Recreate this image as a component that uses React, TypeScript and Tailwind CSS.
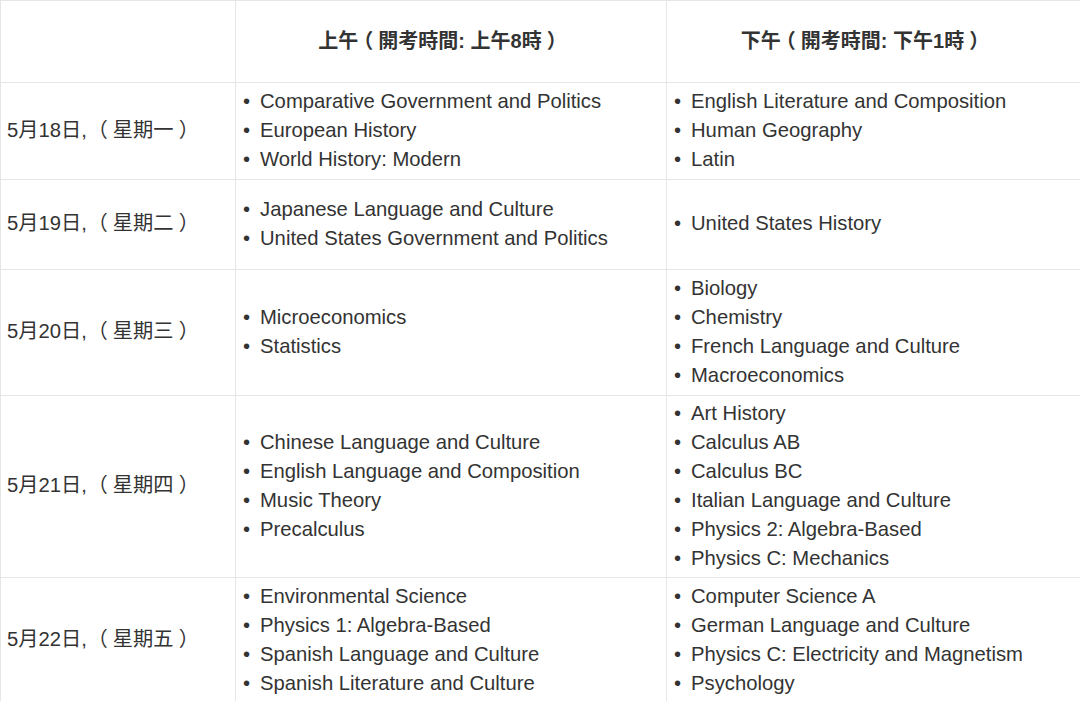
import React from "react";

type Row = { d: string; w: string; am: string[]; pm: string[]; h: string };

const rows: Row[] = [
  {
    d: "18",
    w: "星期一",
    am: ["Comparative Government and Politics", "European History", "World History: Modern"],
    pm: ["English Literature and Composition", "Human Geography", "Latin"],
    h: "h-[97px]",
  },
  {
    d: "19",
    w: "星期二",
    am: ["Japanese Language and Culture", "United States Government and Politics"],
    pm: ["United States History"],
    h: "h-[90px]",
  },
  {
    d: "20",
    w: "星期三",
    am: ["Microeconomics", "Statistics"],
    pm: ["Biology", "Chemistry", "French Language and Culture", "Macroeconomics"],
    h: "h-[126px]",
  },
  {
    d: "21",
    w: "星期四",
    am: ["Chinese Language and Culture", "English Language and Composition", "Music Theory", "Precalculus"],
    pm: [
      "Art History",
      "Calculus AB",
      "Calculus BC",
      "Italian Language and Culture",
      "Physics 2: Algebra-Based",
      "Physics C: Mechanics",
    ],
    h: "h-[182px]",
  },
  {
    d: "22",
    w: "星期五",
    am: [
      "Environmental Science",
      "Physics 1: Algebra-Based",
      "Spanish Language and Culture",
      "Spanish Literature and Culture",
    ],
    pm: [
      "Computer Science A",
      "German Language and Culture",
      "Physics C: Electricity and Magnetism",
      "Psychology",
    ],
    h: "h-[126px]",
  },
];

function Paren({ ch }: { ch: string }) {
  return (
    <span className="inline-block w-[1em] text-center [font-feature-settings:'halt']">{ch}</span>
  );
}

function List({ items }: { items: string[] }) {
  return (
    <ul className="pl-[6px] flex flex-col">
      {items.map((t) => (
        <li key={t} className="flex leading-[29px]">
          <span className="w-[18px] shrink-0 pl-[1px]">•</span>
          <span>{t}</span>
        </li>
      ))}
    </ul>
  );
}

export default function App() {
  return (
    <div
      className="w-[1080px] bg-white text-[#333] text-[20.25px]"
      style={{ fontFamily: '"Liberation Sans", "Noto Sans CJK TC", Arial, sans-serif' }}
    >
      <div className="grid grid-cols-[235px_431px_414px] border-t border-l border-[#e6e6e6]">
        <div className="h-[82px] border-r border-b border-[#e6e6e6]" />
        <div className="h-[82px] border-r border-b border-[#e6e6e6] flex items-center justify-center pr-[22px] pb-[2px] font-bold text-[20px] whitespace-pre">
          上午<Paren ch="（" />開考時間: 上午8時<Paren ch="）" />
        </div>
        <div className="h-[82px] border-r border-b border-[#e6e6e6] flex items-center justify-center pr-[22px] pb-[2px] font-bold text-[20px] whitespace-pre">
          下午<Paren ch="（" />開考時間: 下午1時<Paren ch="）" />
        </div>
        {rows.map((r) => (
          <React.Fragment key={r.d}>
            <div className={`${r.h} border-r border-b border-[#e6e6e6] flex items-center pl-[6px] pb-[2px] whitespace-pre`}>
              5月{r.d}日, <Paren ch="（" />
              {r.w}
              <Paren ch="）" />
            </div>
            <div className={`${r.h} border-r border-b border-[#e6e6e6] flex items-center pb-[2px]`}>
              <List items={r.am} />
            </div>
            <div className={`${r.h} border-r border-b border-[#e6e6e6] flex items-center pb-[2px]`}>
              <List items={r.pm} />
            </div>
          </React.Fragment>
        ))}
      </div>
    </div>
  );
}
